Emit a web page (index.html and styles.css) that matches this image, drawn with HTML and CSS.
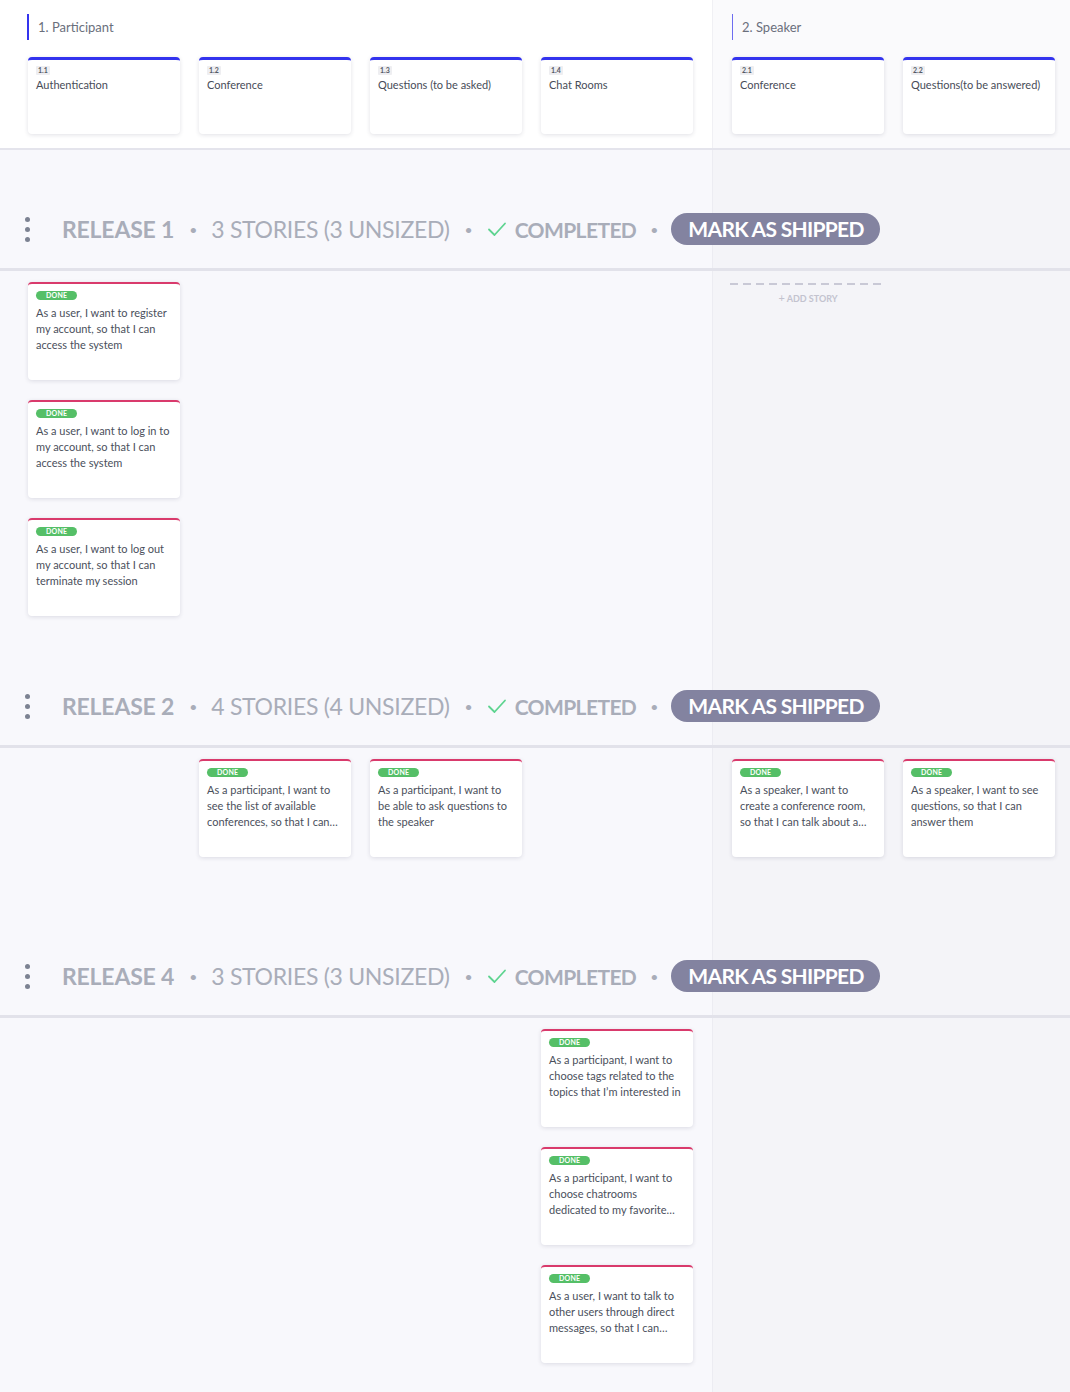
FILE: index.html
```html
<!DOCTYPE html>
<html lang="en">
<head>
<meta charset="utf-8">
<title>Story map</title>
<link rel="stylesheet" href="styles.css">
</head>
<body>
<div class="board">
  <header class="map-head">
    <div class="group group-a">
      <div class="group-title">1. Participant</div>
      <div class="cols">
        <div class="feature"><span class="tag">1.1</span><div class="feature-name">Authentication</div></div>
        <div class="feature"><span class="tag">1.2</span><div class="feature-name">Conference</div></div>
        <div class="feature"><span class="tag">1.3</span><div class="feature-name">Questions (to be asked)</div></div>
        <div class="feature"><span class="tag">1.4</span><div class="feature-name">Chat Rooms</div></div>
      </div>
    </div>
    <div class="group group-b">
      <div class="group-title light">2. Speaker</div>
      <div class="cols">
        <div class="feature"><span class="tag">2.1</span><div class="feature-name">Conference</div></div>
        <div class="feature"><span class="tag">2.2</span><div class="feature-name">Questions(to be answered)</div></div>
      </div>
    </div>
  </header>

  <section class="release">
    <div class="release-head">
      <span class="kebab"><i></i><i></i><i></i></span>
      <span class="r-name">RELEASE 1</span>
      <span class="sep">•</span>
      <span class="r-count">3 STORIES (3 UNSIZED)</span>
      <span class="sep">•</span>
      <svg class="check" width="20" height="16" viewBox="0 0 20 16"><path d="M2 8.5 L7.5 14 L18 2.5" fill="none" stroke="#5ed490" stroke-width="1.8" stroke-linecap="round" stroke-linejoin="round"/></svg>
      <span class="r-status">COMPLETED</span>
      <span class="sep last">•</span>
      <span class="ship">MARK AS SHIPPED</span>
    </div>
    <div class="stories">
      <div class="group group-a">
        <div class="cols">
          <div class="col">
            <div class="story"><span class="done">DONE</span><p>As a user, I want to register my account, so that I can access the system</p></div>
            <div class="story"><span class="done">DONE</span><p>As a user, I want to log in to my account, so that I can access the system</p></div>
            <div class="story"><span class="done">DONE</span><p>As a user, I want to log out my account, so that I can terminate my session</p></div>
          </div>
          <div class="col"></div>
          <div class="col"></div>
          <div class="col"></div>
        </div>
      </div>
      <div class="group group-b">
        <div class="cols">
          <div class="col">
            <div class="add-story"><span class="plus">+</span> ADD STORY</div>
          </div>
          <div class="col"></div>
        </div>
      </div>
    </div>
  </section>

  <section class="release">
    <div class="release-head">
      <span class="kebab"><i></i><i></i><i></i></span>
      <span class="r-name">RELEASE 2</span>
      <span class="sep">•</span>
      <span class="r-count">4 STORIES (4 UNSIZED)</span>
      <span class="sep">•</span>
      <svg class="check" width="20" height="16" viewBox="0 0 20 16"><path d="M2 8.5 L7.5 14 L18 2.5" fill="none" stroke="#5ed490" stroke-width="1.8" stroke-linecap="round" stroke-linejoin="round"/></svg>
      <span class="r-status">COMPLETED</span>
      <span class="sep last">•</span>
      <span class="ship">MARK AS SHIPPED</span>
    </div>
    <div class="stories">
      <div class="group group-a">
        <div class="cols">
          <div class="col"></div>
          <div class="col">
            <div class="story"><span class="done">DONE</span><p>As a participant, I want to see the list of available conferences, so that I can…</p></div>
          </div>
          <div class="col">
            <div class="story"><span class="done">DONE</span><p>As a participant, I want to be able to ask questions to the speaker</p></div>
          </div>
          <div class="col"></div>
        </div>
      </div>
      <div class="group group-b">
        <div class="cols">
          <div class="col">
            <div class="story"><span class="done">DONE</span><p>As a speaker, I want to create a conference room, so that I can talk about a…</p></div>
          </div>
          <div class="col">
            <div class="story"><span class="done">DONE</span><p>As a speaker, I want to see questions, so that I can answer them</p></div>
          </div>
        </div>
      </div>
    </div>
  </section>

  <section class="release">
    <div class="release-head">
      <span class="kebab"><i></i><i></i><i></i></span>
      <span class="r-name">RELEASE 4</span>
      <span class="sep">•</span>
      <span class="r-count">3 STORIES (3 UNSIZED)</span>
      <span class="sep">•</span>
      <svg class="check" width="20" height="16" viewBox="0 0 20 16"><path d="M2 8.5 L7.5 14 L18 2.5" fill="none" stroke="#5ed490" stroke-width="1.8" stroke-linecap="round" stroke-linejoin="round"/></svg>
      <span class="r-status">COMPLETED</span>
      <span class="sep last">•</span>
      <span class="ship">MARK AS SHIPPED</span>
    </div>
    <div class="stories">
      <div class="group group-a">
        <div class="cols">
          <div class="col"></div>
          <div class="col"></div>
          <div class="col"></div>
          <div class="col">
            <div class="story"><span class="done">DONE</span><p>As a participant, I want to choose tags related to the topics that I’m interested in</p></div>
            <div class="story"><span class="done">DONE</span><p>As a participant, I want to choose chatrooms dedicated to my favorite…</p></div>
            <div class="story"><span class="done">DONE</span><p>As a user, I want to talk to other users through direct messages, so that I can…</p></div>
          </div>
        </div>
      </div>
      <div class="group group-b">
        <div class="cols">
          <div class="col"></div>
          <div class="col"></div>
        </div>
      </div>
    </div>
  </section>
</div>
</body>
</html>
```

FILE: styles.css
```css
* { box-sizing: border-box; }
html, body { margin: 0; padding: 0; }
body {
  font-family: Lato, "Noto Sans", sans-serif;
  background: linear-gradient(to right, #f8f8fc 0, #f8f8fc 712px, #ececf2 712px, #ececf2 713px, #f4f4f8 713px);
  min-height: 1392px;
  color: #4b505c;
}
.board { width: 1070px; }

/* header */
.map-head {
  display: flex;
  background: linear-gradient(to right, #ffffff 0, #ffffff 712px, #f0f0f4 712px, #f0f0f4 713px, #fafafc 713px);
  border-bottom: 2px solid #e4e4ec;
  padding: 14px 0 14px 0;
}
.group-a { padding-left: 28px; padding-right: 19px; width: 713px; }
.group-b { padding-left: 19px; width: 357px; }
.cols { display: flex; gap: 19px; }
.group-title {
  height: 26px;
  border-left: 2px solid #3434ee;
  padding-left: 9px;
  margin-left: -1px;
  font-size: 13px;
  line-height: 26px;
  color: #6a6f7c;
  margin-bottom: 17px;
}
.group-title.light { border-left: 1px solid #6d6df0; padding-left: 9px; margin-left: 0; }
.feature {
  width: 152px;
  height: 77px;
  background: #fff;
  border-top: 3px solid #3333ee;
  border-radius: 4px;
  box-shadow: 0 1px 4px rgba(40, 40, 80, 0.14);
  padding: 6px 8px 0 8px;
  line-height: 1;
}
.tag {
  display: block;
  width: fit-content;
  font-size: 7px;
  font-weight: 700;
  line-height: 9px;
  height: 9px;
  padding: 0 2px;
  background: #eeeef1;
  color: #555a66;
  border-radius: 1px;
}
.feature-name {
  font-size: 11px;
  line-height: 16px;
  color: #474c58;
  margin-top: 2px;
}

/* releases */
.release-head {
  display: flex;
  align-items: center;
  height: 121px;
  padding: 63px 0 23px 23px;
  border-bottom: 3px solid #e2e2ea;
  color: #a9adb9;
  font-size: 23px;
  white-space: nowrap;
}
.kebab {
  display: flex;
  flex-direction: column;
  gap: 5px;
  width: 8px;
  align-items: center;
  margin-right: 31px;
}
.kebab i {
  display: block;
  width: 5px;
  height: 5px;
  border-radius: 50%;
  background: #7c8292;
}
.r-name { font-weight: 700; letter-spacing: -0.2px; }
.r-count { font-weight: 400; letter-spacing: -0.3px; }
.r-status { font-weight: 700; font-size: 21px; letter-spacing: -0.6px; }
.sep {
  font-size: 14px;
  margin: 0 14px 0 15px;
  color: #a9adb9;
}
.sep.last { margin: 0 13px 0 14px; }
.check { margin-right: 8px; }
.ship {
  background: #8383a0;
  color: #fff;
  font-weight: 700;
  font-size: 21px;
  height: 32px;
  line-height: 32px;
  border-radius: 16px;
  padding: 0 16px 0 17px;
  letter-spacing: -0.7px;
}

.stories {
  display: flex;
  min-height: 149px;
  padding: 11px 0;
}
.col {
  width: 152px;
  display: flex;
  flex-direction: column;
  gap: 20px;
}
.story {
  width: 152px;
  height: 98px;
  background: #fff;
  border-top: 2px solid #d93a6c;
  border-radius: 4px;
  box-shadow: 0 1px 4px rgba(40, 40, 80, 0.14);
  padding: 7px 8px 0 8px;
  line-height: 1;
}
.done {
  display: block;
  width: fit-content;
  background: #55bf67;
  color: #fff;
  font-size: 7px;
  font-weight: 700;
  line-height: 9px;
  height: 9px;
  padding: 0 10px;
  border-radius: 5px;
  letter-spacing: 0.2px;
}
.story p {
  margin: 5px 0 0 0;
  font-size: 11px;
  line-height: 16px;
  color: #4a4f5c;
}
.add-story {
  margin-left: -2px;
  margin-top: 1px;
  width: 156px;
  padding-top: 8px;
  background: repeating-linear-gradient(to right, #c9c9d6 0, #c9c9d6 8px, transparent 8px, transparent 13px) top left / 100% 2px no-repeat;
  text-align: center;
  font-size: 9px;
  font-weight: 700;
  color: #c3c3cf;
}
.plus { font-weight: 400; font-size: 11px; }
```
